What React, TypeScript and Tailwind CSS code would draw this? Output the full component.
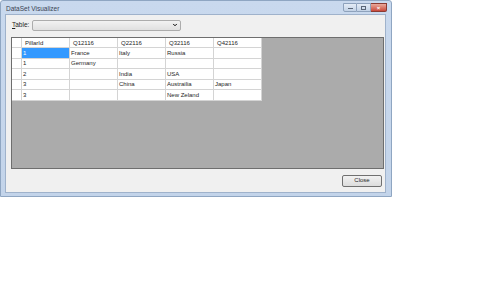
import { ChevronDown } from "lucide-react";

const columns = ["PillarId", "Q12116", "Q22116", "Q32116", "Q42116"];

const rows = [
  ["1", "France", "Italy", "Russia", ""],
  ["1", "Germany", "", "", ""],
  ["2", "", "India", "USA", ""],
  ["3", "", "China", "Austrailia", "Japan"],
  ["3", "", "", "New Zeland", ""],
];

const App = () => {
  return (
    <div
      className="w-[480px] h-[300px] bg-white text-[#1e1e1e]"
      style={{ fontFamily: '"Liberation Sans", Arial, sans-serif' }}
    >
      {/* Window */}
      <div className="w-[392px] h-[197px] flex flex-col border border-[#8fa6c2] rounded-t-[3px] bg-gradient-to-b from-[#c9d9ee] to-[#c3d4ea]">
        {/* Title bar */}
        <div className="h-[13px] flex items-center pl-[5px] pr-[4px]">
          <span className="text-[6.5px] text-[#3a4352] mt-[3px]">DataSet Visualizer</span>
          <div className="ml-auto flex items-start self-start mt-[2px]">
            <div className="w-[14px] h-[9px] border border-[#8ea2bc] rounded-bl-[2px] bg-gradient-to-b from-[#e4ecf6] to-[#c2d2e6] flex items-end justify-center pb-[2px]">
              <div className="w-[5px] h-[1px] bg-[#5a6677]" />
            </div>
            <div className="w-[14px] h-[9px] border border-l-0 border-[#8ea2bc] bg-gradient-to-b from-[#e4ecf6] to-[#c2d2e6] flex items-center justify-center">
              <div className="w-[5px] h-[4px] border border-[#5a6677]" />
            </div>
            <div className="w-[16px] h-[9px] border border-l-0 border-[#8b3a32] rounded-br-[2px] bg-gradient-to-b from-[#e9a99c] to-[#c8473a] flex items-center justify-center text-[6px] leading-none font-bold text-white">
              ×
            </div>
          </div>
        </div>

        {/* Client area */}
        <div className="flex-1 ml-[4px] mr-[5px] mb-[3px] bg-[#f0f0f0] border border-[#9fb2cb] flex flex-col">
          {/* Table selector */}
          <div className="h-[20px] flex items-center pl-[6px]">
            <span className="text-[6.5px] w-[20px]">
              <span className="underline">T</span>able:
            </span>
            <div className="w-[149px] h-[11px] border border-[#acacac] rounded-[2px] bg-gradient-to-b from-[#f2f2f2] to-[#e0e0e0] flex items-center justify-end pr-[2px]">
              <ChevronDown size={6} strokeWidth={4} className="text-black" />
            </div>
          </div>

          {/* Grid */}
          <div className="mt-[2px] ml-[5px] mr-[1px] h-[132px] bg-[#ababab] border border-[#6e6e6e]">
            <div className="w-[250px] bg-white">
              <div className="flex h-[10px] text-[6px] leading-none">
                <div className="w-[10px] border-r border-b border-[#d4d4d4]" />
                {columns.map((c) => (
                  <div
                    key={c}
                    className="w-[48px] pl-[3px] flex items-center border-r border-b border-[#d4d4d4] text-[#1e1e1e]"
                  >
                    {c}
                  </div>
                ))}
              </div>
              {rows.map((r, i) => (
                <div key={i} className="flex h-[10.5px] text-[6px] leading-none">
                  <div className="w-[10px] border-r border-b border-[#d4d4d4] bg-white" />
                  {r.map((v, j) => (
                    <div
                      key={j}
                      className={
                        i === 0 && j === 0
                          ? "w-[48px] pl-[1px] flex items-center border-r border-b border-[#d4d4d4] bg-[#3399ff] text-white"
                          : "w-[48px] pl-[1px] flex items-center border-r border-b border-[#d4d4d4]"
                      }
                    >
                      {v}
                    </div>
                  ))}
                </div>
              ))}
            </div>
          </div>

          {/* Footer */}
          <div className="flex-1 flex items-center justify-end pr-[3px]">
            <div className="w-[40px] h-[12px] border border-[#707070] rounded-[2px] bg-gradient-to-b from-[#f2f2f2] to-[#dcdcdc] flex items-center justify-center text-[6px]">
              Close
            </div>
          </div>
        </div>
      </div>
    </div>
  );
};

export default App;
